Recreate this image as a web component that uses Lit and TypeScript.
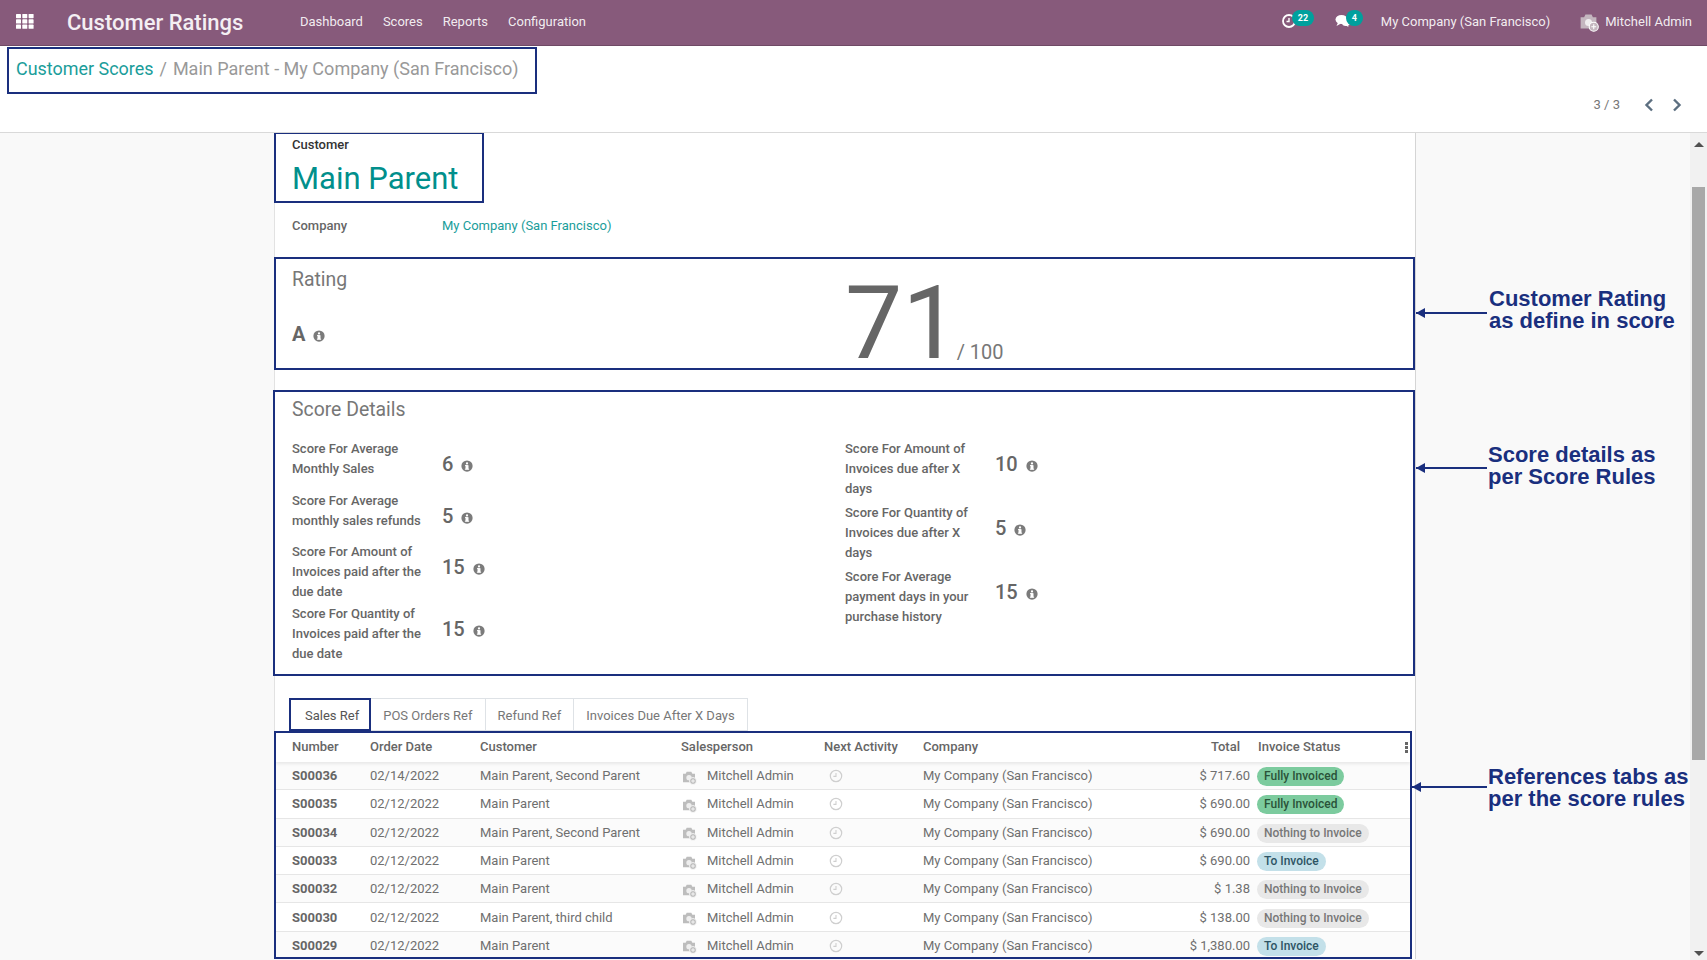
import { LitElement, html, css, svg } from "lit";
import { customElement } from "lit/decorators.js";

const info = html`<svg class="info" viewBox="0 0 16 16"><circle cx="8" cy="8" r="7.5" fill="currentColor"/><rect x="6" y="7" width="4" height="5.6" fill="#fff"/><rect x="5.4" y="6.6" width="3.6" height="1.3" fill="#fff"/><rect x="5.2" y="11.6" width="5.6" height="1.3" fill="#fff"/><circle cx="8" cy="4.5" r="1.5" fill="#fff"/></svg>`;
const avatarPaths = svg`<path d="M3 7h4l1.5-3h7L17 7h4v13H3z" fill="currentColor"/><circle cx="12" cy="13" r="4" fill="#fff" opacity=".75"/><circle cx="18" cy="18" r="5.2" fill="currentColor" stroke="#fff" stroke-width="1.2"/><path d="M18 15.2v5.6M15.2 18h5.6" stroke="#fff" stroke-width="1.2"/>`;
const clock = html`<svg class="clock" viewBox="0 0 16 16"><circle cx="8" cy="8" r="6.5" fill="none" stroke="currentColor" stroke-width="1.4"/><path d="M8 4.5V8.4H5" fill="none" stroke="currentColor" stroke-width="1.2"/></svg>`;

const left = [
  ["Score For Average Monthly Sales", "6"],
  ["Score For Average monthly sales refunds", "5"],
  ["Score For Amount of Invoices paid after the due date", "15"],
  ["Score For Quantity of Invoices paid after the due date", "15"],
];
const right = [
  ["Score For Amount of Invoices due after X days", "10"],
  ["Score For Quantity of Invoices due after X days", "5"],
  ["Score For Average payment days in your purchase history", "15"],
];
const rows = [
  ["S00036", "02/14/2022", "Main Parent, Second Parent", "$ 717.60", "Fully Invoiced", "green"],
  ["S00035", "02/12/2022", "Main Parent", "$ 690.00", "Fully Invoiced", "green"],
  ["S00034", "02/12/2022", "Main Parent, Second Parent", "$ 690.00", "Nothing to Invoice", "grey"],
  ["S00033", "02/12/2022", "Main Parent", "$ 690.00", "To Invoice", "blue"],
  ["S00032", "02/12/2022", "Main Parent", "$ 1.38", "Nothing to Invoice", "grey"],
  ["S00030", "02/12/2022", "Main Parent, third child", "$ 138.00", "Nothing to Invoice", "grey"],
  ["S00029", "02/12/2022", "Main Parent", "$ 1,380.00", "To Invoice", "blue"],
];
const notes = [
  { top: 288, left: 1489, arrow: 1416, w: 71, ay: 312, a: "Customer Rating", b: "as define in score" },
  { top: 444, left: 1488, arrow: 1416, w: 71, ay: 467, a: "Score details as", b: "per Score Rules" },
  { top: 766, left: 1488, arrow: 1412, w: 75, ay: 786, a: "References tabs as", b: "per the score rules" },
];

@customElement("app-root")
export class AppRoot extends LitElement {
  static styles = css`
    :host { display: block; position: relative; width: 1707px; height: 960px; overflow: hidden; background: #f9f9f9; font-family: Roboto, "Noto Sans", sans-serif; font-size: 13px; color: #666; }
    .nav { height: 46px; box-sizing: border-box; background: #875a7b; border-bottom: 1px solid #6f4a65; display: flex; align-items: center; color: rgba(255,255,255,.9); }
    .apps { width: 18px; height: 15px; margin-left: 16px; margin-top: -2px; }
    .brand { font-size: 22px; font-weight: 500; color: #f4eff3; margin-left: 33px; width: 233px; margin-top: -1px; }
    .menu { display: flex; gap: 20px; margin-top: -3px; }
    .spacer { flex: 1; }
    .sys { display: flex; align-items: center; margin-top: -3px; }
    .ico { position: relative; display: inline-flex; width: 16px; height: 16px; color: #fff; }
    .ico svg { width: 16px; height: 16px; }
    .badge { position: absolute; left: 11px; top: -3px; background: #00a09d; color: #fff; font-size: 9px; font-weight: 700; border-radius: 9px; height: 16px; line-height: 16px; padding: 0 6px; }
    .navav { width: 21px; height: 21px; color: #c4b6bf; margin-right: 6px; }
    .panel { height: 87px; box-sizing: border-box; background: #fff; border-bottom: 1px solid #d9d9d9; position: relative; display: flex; flex-direction: column; align-items: flex-start; }
    .crumbs { margin: 1px 0 0 7px; width: 530px; height: 47px; box-sizing: border-box; border: 2px solid #1a2f7e; font-size: 17.95px; display: flex; align-items: center; padding: 0 0 4px 7px; color: #999; margin-bottom: -1px; }
    .crumbs a { color: #1a9d9a; }
    .crumbs i { font-style: normal; margin: 0 6px; }
    .crumbs span { font-size: 18.05px; }
    .pager { align-self: flex-end; display: flex; align-items: center; margin: 4px 24px 0 0; color: #777; font-size: 13px; }
    .pager svg { width: 12px; height: 14px; margin-left: 16px; color: #5c6f80; }
    .pager span { margin-right: 7px; }
    .body { flex: 1; display: flex; height: 827px; overflow: hidden; }
    .main { flex: 1; min-width: 0; overflow: hidden; }
    .sheet { width: 1142px; height: 827px; margin: 0 auto; box-sizing: border-box; background: #fff; border-left: 1px solid #e2e2e2; border-right: 1px solid #d5d5d5; }
    .sbar { width: 17px; background: #f1f1f1; position: relative; display: flex; flex-direction: column; align-items: center; }
    .sbar .thumb { position: absolute; left: 2px; right: 2px; top: 54px; height: 573px; background: #a8a8a8; }
    .up, .dn { width: 0; height: 0; border-left: 5px solid transparent; border-right: 5px solid transparent; position: absolute; }
    .up { top: 9px; border-bottom: 5px solid #505050; }
    .dn { bottom: 4px; border-top: 5px solid #505050; }
    .cust { width: 210px; height: 71px; box-sizing: border-box; margin: -1px 0 0 -1px; border: 2px solid #1a2f7e; padding: 2px 0 0 16px; background: #fff; position: relative; }
    .cust b { display: block; font-size: 13px; font-weight: 500; color: #333; line-height: 18px; }
    .cust h1 { margin: 3px 0 0; font-size: 31px; font-weight: 400; color: #018f8c; line-height: 44px; }
    .company { display: grid; grid-template-columns: 150px auto; padding: 0 0 10px 17px; height: 54px; box-sizing: border-box; align-items: center; }
    .company b, .lab { font-weight: 500; color: #666; }
    .company a { color: #1a9d9a; }
    .rating { height: 113px; box-sizing: border-box; border: 2px solid #1a2f7e; margin-left: -1px; display: grid; grid-template-columns: 553px auto; padding-left: 16px; }
    h2 { margin: 0; font-size: 19.4px; font-weight: 400; color: #777; line-height: 26px; }
    .rating h2 { margin-top: 8px; }
    .grade { font-size: 20px; font-weight: 700; color: #666; margin-top: 28px; display: flex; align-items: center; gap: 8px; line-height: 26px; }
    .big { font-size: 102px; line-height: 100px; color: #666; display: flex; align-items: baseline; margin-top: 14px; }
    .big small { font-size: 20px; color: #777; margin-left: -3px; line-height: 20px; transform: translateY(1px); }
    .info { width: 12px; height: 12px; color: #7b7b7b; flex: none; margin-top: 4px; }
    .details { height: 286px; box-sizing: border-box; margin: 20px 0 0 -2px; border: 2px solid #1a2f7e; padding: 5px 0 0 17px; }
    .cols { display: grid; grid-template-columns: 553px auto; margin-top: 16px; }
    .sc { display: grid; grid-template-columns: 150px auto; padding-bottom: 2px; min-height: 49.5px; }
    .col-r .sc { padding-bottom: 4px; }
    .lab { width: 135px; line-height: 20px; }
    .val { display: flex; align-items: center; gap: 8px; font-size: 20px; font-weight: 500; color: #666; height: 26px; }
    .sc.three .val { margin-top: 12px; }
    .sc.two .val { margin-top: 12px; }
    .tabs { display: flex; margin: 22px 0 0 14px; height: 33px; position: relative; }
    .tabs div { height: 33px; box-sizing: border-box; border: 1px solid #dee2e6; border-left: 0; padding: 1px 12px 0; display: flex; align-items: center; color: #777; }
    .tabs div.on { border: 2px solid #1a2f7e; color: #555; padding: 1px 10px 0 14px; }
    .list { height: 228px; box-sizing: border-box; margin: 0 3px 0 -1px; border: 2px solid #1a2f7e; overflow: hidden; position: relative; }
    .r { display: grid; grid-template-columns: 78px 110px 201px 143px 99px 212px 115px auto; align-items: center; height: 28.3px; padding-left: 16px; box-sizing: border-box; border-bottom: 1px solid #e6e6e6; background: #fff; color: #6f6f6f; white-space: nowrap; }
    .r:nth-child(even) { background: #fbfbfb; }
    .r.head { height: 29px; padding-bottom: 2px; font-weight: 500; color: #666; box-shadow: 0 2px 3px rgba(0,0,0,.08); position: relative; border-bottom: 0; }
    .num { font-weight: 700; color: #666; }
    .sales { display: flex; align-items: center; gap: 10px; }
    .sales svg { width: 16px; height: 16px; color: #bdbdbd; margin-top: 2px; }
    .clock { width: 14px; height: 14px; color: #cfcfcf; margin: 1px 0 0 5px; display: block; }
    .tot { text-align: right; }
    .head .tot { padding-right: 10px; }
    .pill { display: inline-block; height: 19px; line-height: 19px; border-radius: 10px; padding: 0 7px; font-size: 12px; font-weight: 500; margin: 2px 0 0 7px; }
    .head .st { margin-left: 8px; }
    .green { background: #7ccb9e; color: #2a5339; }
    .grey { background: #e8e8e8; color: #777; }
    .blue { background: #c3e0e9; color: #2d5464; }
    .kebab { position: absolute; right: 2px; top: 9px; width: 3px; height: 11px; background: repeating-linear-gradient(#666 0 3px, transparent 3px 4px); }
    .note { position: absolute; font-family: "Liberation Sans", Arial, sans-serif; font-weight: 700; font-size: 22px; line-height: 22px; color: #1a2f7e; white-space: nowrap; }
    .arrow { position: absolute; height: 2px; background: #1a2f7e; }
    .arrow::before { content: ""; position: absolute; left: 0; top: -4px; border-right: 9px solid #1a2f7e; border-top: 5px solid transparent; border-bottom: 5px solid transparent; }
  `;

  private score(x: string[]) {
    const three = x[0].length > 40;
    return html`<div class="sc ${three ? "three" : "two"}"><div class="lab">${x[0]}</div><div class="val">${x[1]} ${info}</div></div>`;
  }

  render() {
    return html`
      <div class="nav">
        <svg class="apps" viewBox="0 0 18 15" fill="#fff">${[0, 1, 2].map((r) => [0, 1, 2].map((c) => svg`<rect x="${c * 6.3}" y="${r * 5.3}" width="5" height="4.2" rx=".6"/>`))}</svg>
        <div class="brand">Customer Ratings</div>
        <div class="menu"><span>Dashboard</span><span>Scores</span><span>Reports</span><span>Configuration</span></div>
        <div class="spacer"></div>
        <div class="sys">
          <span class="ico" style="margin-right:38px"><svg viewBox="0 0 16 16"><circle cx="8" cy="8" r="6" fill="none" stroke="currentColor" stroke-width="1.8"/><path d="M8 5v3.5H5.5" fill="none" stroke="currentColor" stroke-width="1.4"/></svg><span class="badge">22</span></span>
          <span class="ico" style="margin-right:30px"><svg viewBox="0 0 16 16" fill="currentColor"><ellipse cx="6.5" cy="6.5" rx="6" ry="4.6"/><path d="M3 9.5 1.5 13 6 10.5zM10 12l3.5 2-1-3z"/><ellipse cx="11" cy="10" rx="4" ry="3"/></svg><span class="badge">4</span></span>
          <span style="margin-right:28px">My Company (San Francisco)</span>
          <svg class="navav" viewBox="0 0 24 24">${avatarPaths}</svg>
          <span style="margin-right:15px">Mitchell Admin</span>
        </div>
      </div>
      <div class="panel">
        <div class="crumbs"><a>Customer Scores</a><i>/</i><span>Main Parent - My Company (San Francisco)</span></div>
        <div class="pager"><span>3 / 3</span>
          <svg viewBox="0 0 12 14"><path d="M9 1.5 3.5 7 9 12.5" fill="none" stroke="currentColor" stroke-width="2.4"/></svg>
          <svg viewBox="0 0 12 14"><path d="M3 1.5 8.5 7 3 12.5" fill="none" stroke="currentColor" stroke-width="2.4"/></svg>
        </div>
      </div>
      <div class="body">
        <div class="main"><div class="sheet">
          <div class="cust"><b>Customer</b><h1>Main Parent</h1></div>
          <div class="company"><b>Company</b><a>My Company (San Francisco)</a></div>
          <div class="rating">
            <div><h2>Rating</h2><div class="grade">A ${info}</div></div>
            <div class="big">71<small>/ 100</small></div>
          </div>
          <div class="details">
            <h2>Score Details</h2>
            <div class="cols">
              <div class="col-l">${left.map((x) => this.score(x))}</div>
              <div class="col-r">${right.map((x) => this.score(x))}</div>
            </div>
          </div>
          <div class="tabs"><div class="on">Sales Ref</div><div>POS Orders Ref</div><div>Refund Ref</div><div>Invoices Due After X Days</div></div>
          <div class="list">
            <div class="r head"><span>Number</span><span>Order Date</span><span>Customer</span><span>Salesperson</span><span>Next Activity</span><span>Company</span><span class="tot">Total</span><span class="st">Invoice Status</span><i class="kebab"></i></div>
            ${rows.map((r) => html`<div class="r"><span class="num">${r[0]}</span><span>${r[1]}</span><span>${r[2]}</span><span class="sales"><svg viewBox="0 0 24 24">${avatarPaths}</svg>Mitchell Admin</span><span>${clock}</span><span>My Company (San Francisco)</span><span class="tot">${r[3]}</span><span><span class="pill ${r[5]}">${r[4]}</span></span></div>`)}
          </div>
        </div></div>
        <div class="sbar"><i class="up"></i><i class="thumb"></i><i class="dn"></i></div>
      </div>
      ${notes.map((n) => html`
        <div class="note" style="left:${n.left}px;top:${n.top}px">${n.a}<br />${n.b}</div>
        <i class="arrow" style="left:${n.arrow}px;top:${n.ay}px;width:${n.w}px"></i>`)}
    `;
  }
}
